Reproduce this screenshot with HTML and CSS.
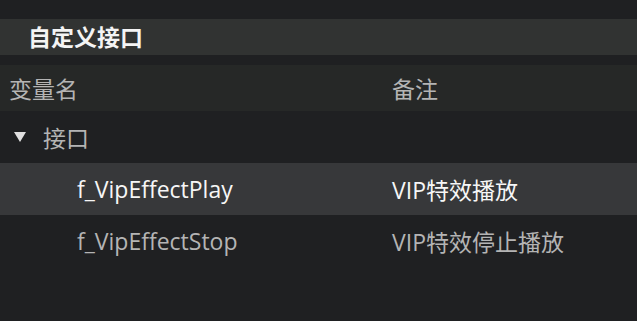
FILE: index.html
```html
<!DOCTYPE html>
<html lang="zh-CN">
<head>
  <meta charset="UTF-8" />
  <title>自定义接口</title>
  <link rel="stylesheet" href="styles.css">
</head>
<body>

  <section class="panel">
    <h2 class="panel-title">自定义接口</h2>

    <div class="table">
      <div class="row head">
        <div class="cell">变量名</div>
        <div class="cell">备注</div>
      </div>

      <div class="row group">
        <div class="cell"><span class="caret"></span>接口</div>
        <div class="cell"></div>
      </div>

      <div class="row item selected">
        <div class="cell">f_VipEffectPlay</div>
        <div class="cell">VIP特效播放</div>
      </div>

      <div class="row item">
        <div class="cell">f_VipEffectStop</div>
        <div class="cell">VIP特效停止播放</div>
      </div>
    </div>
  </section>

</body>
</html>
```

FILE: styles.css
```css
* { margin: 0; padding: 0; box-sizing: border-box; }
body {
  background: #1f2022;
  color: #b4b4b4;
  font-family: 'Open Sans', 'Noto Sans CJK SC', sans-serif;
  font-size: 23px;
  padding-top: 19px;
}

.panel-title {
  height: 36px;
  line-height: 36px;
  background: #313332;
  color: #f4f4f4;
  font-size: 23px;
  font-weight: bold;
  padding-left: 28px;
  margin-bottom: 10px;
}

.row {
  display: grid;
  grid-template-columns: 383px 1fr;
  align-items: center;
  height: 52px;
}
.row .cell {
  padding-left: 9px;
  white-space: nowrap;
}
.row.head {
  height: 46px;
  background: #262827;
}
.row.group .cell:first-child {
  display: flex;
  align-items: center;
  padding-left: 14px;
}
.caret {
  width: 0;
  height: 0;
  border-left: 6px solid transparent;
  border-right: 6px solid transparent;
  border-top: 10px solid #e0e0e0;
  margin-right: 17px;
}
.row.item .cell:first-child {
  padding-left: 77px;
}
.row.selected {
  background: #37383a;
  color: #f6f6f6;
}
```
